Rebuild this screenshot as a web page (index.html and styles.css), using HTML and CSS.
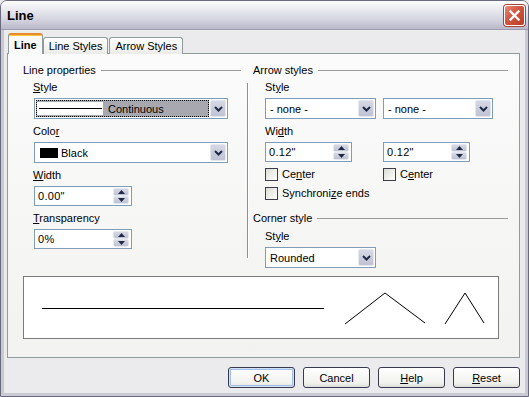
FILE: index.html
```html
<!DOCTYPE html>
<html lang="en">
<head>
  <meta charset="UTF-8">
  <title>Line</title>
  <link rel="stylesheet" href="styles.css">
</head>
<body>

  <div class="window">
    <div class="titlebar">
      <span class="title">Line</span>
      <span class="close">
        <svg width="13" height="13" viewBox="0 0 13 13">
          <path d="M2.5 2.5 L10.5 10.5 M10.5 2.5 L2.5 10.5" stroke="#fff" stroke-width="2.3" stroke-linecap="square" fill="none"/>
        </svg>
      </span>
    </div>

    <div class="client">
      <div class="tabs">
        <div class="tab active">Line</div>
        <div class="tab">Line Styles</div>
        <div class="tab">Arrow Styles</div>
      </div>

      <div class="page">
        <div class="columns">

          <div class="col col-left">
            <div class="group-title"><span>Line properties</span></div>
            <div class="group">
              <div class="label first"><u>S</u>tyle</div>
              <div class="select w-194">
                <div class="select-value focus">
                  <span class="line-sample"><span class="line-stroke"></span></span>
                  <span class="sample-text">Continuous</span>
                </div>
                <span class="drop"><svg width="9" height="6" viewBox="0 0 9 6"><path d="M1 1 L4.5 4.5 L8 1" stroke="#1f2a44" stroke-width="2" fill="none"/></svg></span>
              </div>

              <div class="label">Colo<u>r</u></div>
              <div class="select w-194">
                <div class="select-value">
                  <span class="swatch"></span>
                  <span>Black</span>
                </div>
                <span class="drop"><svg width="9" height="6" viewBox="0 0 9 6"><path d="M1 1 L4.5 4.5 L8 1" stroke="#1f2a44" stroke-width="2" fill="none"/></svg></span>
              </div>

              <div class="label"><u>W</u>idth</div>
              <div class="spin w-98">
                <span class="spin-value">0.00"</span>
                <span class="spin-btns">
                  <span class="spin-btn"><svg width="7" height="4" viewBox="0 0 7 4"><path d="M0 4 L3.5 0 L7 4 Z" fill="#1f2a44"/></svg></span>
                  <span class="spin-btn"><svg width="7" height="4" viewBox="0 0 7 4"><path d="M0 0 L3.5 4 L7 0 Z" fill="#1f2a44"/></svg></span>
                </span>
              </div>

              <div class="label"><u>T</u>ransparency</div>
              <div class="spin w-98">
                <span class="spin-value">0%</span>
                <span class="spin-btns">
                  <span class="spin-btn"><svg width="7" height="4" viewBox="0 0 7 4"><path d="M0 4 L3.5 0 L7 4 Z" fill="#1f2a44"/></svg></span>
                  <span class="spin-btn"><svg width="7" height="4" viewBox="0 0 7 4"><path d="M0 0 L3.5 4 L7 0 Z" fill="#1f2a44"/></svg></span>
                </span>
              </div>
            </div>
          </div>

          <div class="vsep"></div>

          <div class="col col-right">
            <div class="group-title"><span>Arrow styles</span></div>
            <div class="group group-right">
              <div class="label first">St<u>y</u>le</div>
              <div class="pair">
                <div class="select w-111">
                  <div class="select-value"><span>- none -</span></div>
                  <span class="drop"><svg width="9" height="6" viewBox="0 0 9 6"><path d="M1 1 L4.5 4.5 L8 1" stroke="#1f2a44" stroke-width="2" fill="none"/></svg></span>
                </div>
                <div class="select w-110">
                  <div class="select-value"><span>- none -</span></div>
                  <span class="drop"><svg width="9" height="6" viewBox="0 0 9 6"><path d="M1 1 L4.5 4.5 L8 1" stroke="#1f2a44" stroke-width="2" fill="none"/></svg></span>
                </div>
              </div>

              <div class="label">Wi<u>d</u>th</div>
              <div class="pair">
                <div class="cell">
                  <div class="spin w-87">
                    <span class="spin-value">0.12"</span>
                    <span class="spin-btns">
                      <span class="spin-btn"><svg width="7" height="4" viewBox="0 0 7 4"><path d="M0 4 L3.5 0 L7 4 Z" fill="#1f2a44"/></svg></span>
                      <span class="spin-btn"><svg width="7" height="4" viewBox="0 0 7 4"><path d="M0 0 L3.5 4 L7 0 Z" fill="#1f2a44"/></svg></span>
                    </span>
                  </div>
                </div>
                <div class="cell">
                  <div class="spin w-87">
                    <span class="spin-value">0.12"</span>
                    <span class="spin-btns">
                      <span class="spin-btn"><svg width="7" height="4" viewBox="0 0 7 4"><path d="M0 4 L3.5 0 L7 4 Z" fill="#1f2a44"/></svg></span>
                      <span class="spin-btn"><svg width="7" height="4" viewBox="0 0 7 4"><path d="M0 0 L3.5 4 L7 0 Z" fill="#1f2a44"/></svg></span>
                    </span>
                  </div>
                </div>
              </div>

              <div class="pair check-row">
                <div class="cell"><span class="checkbox"></span>Ce<u>n</u>ter</div>
                <div class="cell"><span class="checkbox"></span>C<u>e</u>nter</div>
              </div>
              <div class="check-row sync"><span class="checkbox"></span>Synchroni<u>z</u>e ends</div>
            </div>

            <div class="group-title corner"><span>Corner style</span></div>
            <div class="group group-right">
              <div class="label first corner-label">St<u>y</u>le</div>
              <div class="select w-111">
                <div class="select-value"><span>Rounded</span></div>
                <span class="drop"><svg width="9" height="6" viewBox="0 0 9 6"><path d="M1 1 L4.5 4.5 L8 1" stroke="#1f2a44" stroke-width="2" fill="none"/></svg></span>
              </div>
            </div>
          </div>

        </div>

        <div class="preview">
          <svg width="474" height="61" viewBox="0 0 474 61">
            <path d="M18 31.5 H300" stroke="#000" stroke-width="1.2" fill="none"/>
            <path d="M321 47 L361 16 L401 46" stroke="#000" stroke-width="1" fill="none"/>
            <path d="M421 47 L441 16 L460 46" stroke="#000" stroke-width="1" fill="none"/>
          </svg>
        </div>
      </div>

      <div class="buttons">
        <button class="btn default">OK</button>
        <button class="btn">Cancel</button>
        <button class="btn"><u>H</u>elp</button>
        <button class="btn"><u>R</u>eset</button>
      </div>
    </div>
  </div>

</body>
</html>
```

FILE: styles.css
```css
html, body {
  margin: 0;
  padding: 0;
  background: #ebebee;
}

body {
  font-family: "Liberation Sans", Arial, sans-serif;
  font-size: 11px;
  color: #000;
}

.window {
  width: 529px;
  height: 397px;
  box-sizing: border-box;
  border: 1px solid #6a6a7e;
  border-radius: 7px 7px 0 0;
  background: #ebebee;
  display: flex;
  flex-direction: column;
  overflow: hidden;
}

/* title bar */

.titlebar {
  height: 28px;
  flex: none;
  display: flex;
  align-items: center;
  justify-content: space-between;
  padding: 0 3px 0 6px;
  background: linear-gradient(#fdfdfe 0%, #eaeaf0 30%, #d2d2de 70%, #b8b8c9 100%);
  border-bottom: 1px solid #9d9db0;
}

.title {
  font-size: 13px;
  font-weight: bold;
  color: #000;
  padding-top: 1px;
}

.close {
  width: 21px;
  height: 21px;
  box-sizing: border-box;
  border: 1px solid #fff;
  border-radius: 3px;
  background: linear-gradient(135deg, #e88a78 0%, #d2553f 45%, #b83c27 100%);
  box-shadow: 0 0 0 1px #a5443a;
  display: flex;
  align-items: center;
  justify-content: center;
}

/* client area */

.client {
  flex: 1;
  display: flex;
  flex-direction: column;
  padding: 4px 5px 0 3px;
  border-left: 3px solid #c9c9d4;
  border-right: 3px solid #c9c9d4;
  border-bottom: 3px solid #c9c9d4;
}

.tabs {
  display: flex;
  align-items: flex-end;
  height: 20px;
  padding-left: 1px;
  position: relative;
  z-index: 1;
  margin-bottom: -1px;
}

.tab {
  height: 17px;
  box-sizing: border-box;
  padding: 2px 5px 0;
  border: 1px solid #919b9c;
  border-bottom: none;
  border-radius: 3px 3px 0 0;
  background: linear-gradient(#ffffff, #ebebe8);
  margin-right: 1px;
}

.tab.active {
  height: 21px;
  padding: 4px 5px 0;
  font-weight: bold;
  background: #f9f9f9;
  border-top: 2px solid #e68b2c;
  box-shadow: inset 0 1px 0 #ffc83c;
  margin-right: 0;
}

.page {
  height: 305px;
  box-sizing: border-box;
  border: 1px solid #919b9c;
  background: linear-gradient(#fbfbfb, #f2f2f0);
  padding: 10px 11px 0 15px;
}

.columns {
  display: flex;
  align-items: flex-start;
}

.col-left {
  width: 218px;
}

.col-right {
  flex: 1;
}

.vsep {
  width: 1px;
  height: 175px;
  margin: 19px 5px 0 6px;
  background: #8f8f8f;
  box-shadow: 1px 0 0 #fff;
}

.group-title {
  display: flex;
  align-items: center;
  height: 13px;
  line-height: 13px;
}

.group-title::after {
  content: "";
  flex: 1;
  height: 1px;
  background: #9c9c9c;
  margin-left: 5px;
}

.group-title.corner {
  margin-top: 12px;
}

.group {
  padding-left: 10px;
}

.group-right {
  padding-left: 12px;
}

.label {
  line-height: 13px;
  height: 13px;
  margin: 6px 0 4px;
}

.label.first {
  margin-top: 4px;
}

.label.corner-label {
  margin-top: 5px;
}

/* drop-down list */

.select {
  height: 21px;
  box-sizing: border-box;
  border: 1px solid #7f9db9;
  background: #fff;
  display: flex;
  align-items: center;
  padding: 1px;
  margin-left: 1px;
}

.group-right .select {
  margin-left: 0;
}

.w-194 { width: 194px; }
.w-111 { width: 111px; }
.w-110 { width: 110px; }
.w-98 { width: 98px; }
.w-87 { width: 87px; }

.select-value {
  flex: 1;
  height: 17px;
  display: flex;
  align-items: center;
  padding-left: 3px;
  gap: 3px;
  white-space: nowrap;
}

.select-value.focus {
  background: #a8a8b0;
  outline: 1px dotted #000;
  outline-offset: -1px;
  padding-left: 1px;
  gap: 5px;
}

.line-sample {
  width: 66px;
  height: 13px;
  background: #fff;
  display: flex;
  align-items: center;
}

.line-stroke {
  display: block;
  width: 63px;
  height: 1px;
  margin-left: 2px;
  background: #000;
}

.swatch {
  width: 18px;
  height: 10px;
  background: #000;
  margin-left: 1px;
}

.drop {
  width: 16px;
  height: 17px;
  box-sizing: border-box;
  border: 1px solid #e4e6f0;
  border-radius: 2px;
  background: linear-gradient(#d6d8e4, #bfc2d4);
  display: flex;
  align-items: center;
  justify-content: center;
  margin-left: 1px;
}

/* spin field */

.spin {
  height: 20px;
  box-sizing: border-box;
  border: 1px solid #7f9db9;
  background: #fff;
  display: flex;
  align-items: center;
  padding: 0 2px 0 3px;
  margin-left: 1px;
}

.group-right .spin {
  margin-left: 0;
}

.spin-value {
  flex: 1;
  letter-spacing: 0.3px;
}

.spin-btns {
  width: 16px;
  height: 16px;
  display: flex;
  flex-direction: column;
}

.spin-btn {
  flex: 1;
  box-sizing: border-box;
  border: 1px solid #e4e6f0;
  border-radius: 2px;
  background: linear-gradient(#d6d8e4, #bfc2d4);
  display: flex;
  align-items: center;
  justify-content: center;
}

/* arrow grid */

.pair {
  display: flex;
  gap: 7px;
}

.pair .cell:first-child {
  width: 111px;
}

.check-row {
  margin-top: 6px;
  height: 13px;
  line-height: 13px;
}

.check-row .cell,
.check-row.sync {
  display: flex;
  align-items: center;
}

.check-row.sync {
  margin-top: 6px;
}

.checkbox {
  width: 13px;
  height: 13px;
  box-sizing: border-box;
  border: 1px solid #3d3d4a;
  background: linear-gradient(135deg, #dcdcd7, #ffffff);
  margin-right: 4px;
}

/* preview */

.preview {
  margin-top: 8px;
  width: 476px;
  height: 63px;
  box-sizing: border-box;
  border: 1px solid #7a7a7a;
  background: #fff;
}

.preview svg {
  display: block;
}

/* buttons */

.buttons {
  display: flex;
  justify-content: flex-end;
  gap: 8px;
  margin-top: 9px;
}

.btn {
  width: 67px;
  height: 21px;
  box-sizing: border-box;
  border: 1px solid #3a3a4e;
  border-radius: 3px;
  background: linear-gradient(#ffffff, #f1f1ee 80%, #dcdcd8);
  font-family: "Liberation Sans", Arial, sans-serif;
  font-size: 11px;
  color: #000;
  padding: 0;
}

.btn.default {
  box-shadow: inset 0 0 0 1px #cfe0f7, inset 0 0 0 2px #a5c0e8;
}
```
